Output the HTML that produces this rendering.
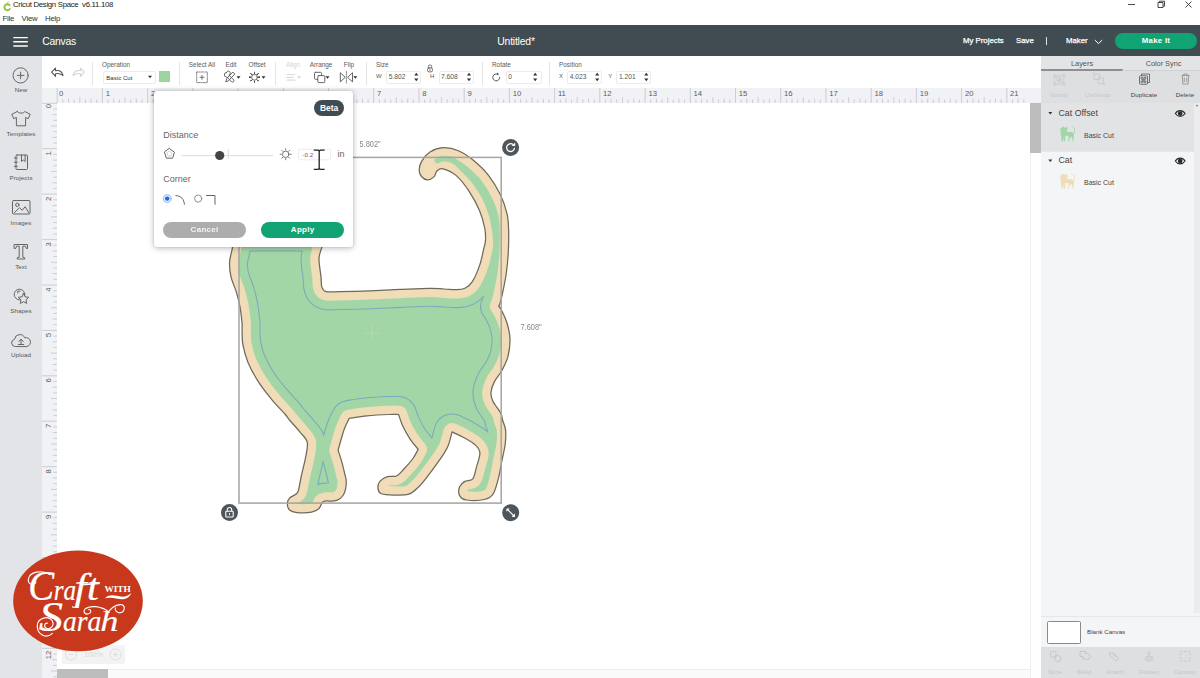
<!DOCTYPE html>
<html><head><meta charset="utf-8"><title>Cricut Design Space</title>
<style>
*{box-sizing:border-box;margin:0;padding:0}
html,body{width:1200px;height:678px;overflow:hidden;background:#fff}
body{position:relative;font-family:"Liberation Sans",sans-serif;color:#4a4a4a;font-size:7px}
.abs{position:absolute}
.t{position:absolute;white-space:nowrap;line-height:1}
.c{transform:translateX(-50%)}
#hdr{left:0;top:25px;width:1200px;height:31px;background:#414b52}
#side{left:0;top:56px;width:42px;height:622px;background:#e3e4e7}
#tool{left:42px;top:56px;width:999px;height:32px;background:#fff}
#rtop{left:42px;top:88px;width:999px;height:15px;background:#f1f2f5}
#rleft{left:42px;top:103px;width:15px;height:575px;background:#f1f2f5}
#rp{left:1041px;top:56px;width:159px;height:622px;background:#f4f5f7}
.sep{position:absolute;top:62px;width:1px;height:23px;background:#e4e4e4}
.lab{color:#5a5a5a;font-size:6.400px;top:62.100px}
.inp{position:absolute;top:70.500px;height:13.500px;border:1px solid #ececec;border-radius:2px;background:#fff}
.sl{font-size:6.2px;color:#555;letter-spacing:.1px}
</style></head><body>

<!-- title bar -->
<svg class="abs" style="left:2px;top:1px" width="10" height="11" viewBox="0 0 10 11"><path d="M7.6 4.2A3 3 0 1 0 7.8 8" fill="none" stroke="#8cc63f" stroke-width="1.9" stroke-linecap="round"/><path d="M5.2 2.2L6.8 .4" stroke="#8cc63f" stroke-width=".9" fill="none"/></svg>
<div class="t" id="ttl" style="left:13px;top:1px;font-size:7.8px;color:#222;letter-spacing:-.3px">Cricut Design Space&nbsp; v6.11.108</div>
<div class="t" style="left:2.5px;top:14.800px;font-size:7.800px;color:#333;letter-spacing:-.25px">File</div><div class="t" style="left:21.600px;top:14.800px;font-size:7.800px;color:#333;letter-spacing:-.25px">View</div><div class="t" style="left:45px;top:14.800px;font-size:7.800px;color:#333;letter-spacing:-.25px">Help</div>
<svg class="abs" style="left:1120px;top:-2px" width="80" height="14" viewBox="0 0 80 14"><path d="M8 6.5h7M38 4.5h5v5h-5zM39.5 4.5v-1.3h5v5h-1.3M65.5 3.5l6 6M71.5 3.5l-6 6" stroke="#333" stroke-width=".9" fill="none"/></svg>

<!-- header -->
<div class="abs" id="hdr"></div>
<svg class="abs" style="left:13px;top:35px" width="15" height="12" viewBox="0 0 15 12"><path d="M.3 2.600h14.500M.3 6.800h14.500M.3 11h14.500" stroke="#fff" stroke-width="1.400"/></svg>
<div class="t" style="left:42.300px;top:36.500px;font-size:10.400px;color:#fff;letter-spacing:-.28px">Canvas</div>
<div class="t c" style="left:516px;top:36.500px;font-size:10.400px;color:#fff;letter-spacing:-.2px">Untitled*</div>
<div class="t" style="left:963px;top:37px;font-size:7.8px;color:#fff;-webkit-text-stroke:.25px #fff">My Projects</div>
<div class="t" style="left:1016px;top:37px;font-size:7.8px;color:#fff;-webkit-text-stroke:.25px #fff">Save</div>
<div class="abs" style="left:1046px;top:37px;width:1px;height:8px;background:#dfe2e4"></div>
<div class="t" style="left:1066px;top:37px;font-size:7.8px;color:#fff;-webkit-text-stroke:.25px #fff">Maker</div>
<svg class="abs" style="left:1094px;top:39px" width="9" height="6" viewBox="0 0 9 6"><path d="M.8 1l3.7 3.6L8.200 1" stroke="#fff" stroke-width="1" fill="none"/></svg>
<div class="abs" style="left:1115px;top:33px;width:82px;height:16px;border-radius:8px;background:#12a374"></div>
<div class="t c" style="left:1156px;top:37px;font-size:7.8px;color:#fff;font-weight:bold;letter-spacing:.3px">Make It</div>

<!-- sidebar -->
<div class="abs" id="side"></div>

<svg class="abs" style="left:0;top:56px" width="42" height="320" viewBox="0 56 42 320" fill="none" stroke="#666" stroke-width="1" stroke-linejoin="round" stroke-linecap="round">
<circle cx="20.600" cy="75.400" r="7.600"/><path d="M17.300 75.400h6.600M20.600 72.100v6.600"/>
<path d="M17.200 111.500l-5.400 2.800 1.900 4.300 2.700-1.100v8.300h9.200v-8.300l2.700 1.100 1.900-4.300-5.400-2.800c-.8 2.200-6.700 2.200-7.600 0z"/>
<rect x="16" y="155" width="11.500" height="14.500" rx="1"/><path d="M14.300 158h3M14.300 162.200h3M14.300 166.400h3M21.500 155v6.500l1.800-1.500 1.800 1.500v-6.500"/>
<rect x="12.500" y="200.500" width="17.500" height="13.500" rx="1"/><circle cx="17.300" cy="204.800" r="1.700"/><path d="M14.500 212.500l5-4.800 2.800 2.600 2.800-3.600 3.500 5.800"/>
<path d="M14.500 244.500h13v4h-1.200l-.8-2.300h-2.700v11l2 .6v1.200h-7.600v-1.200l2-.6v-11h-2.700l-.8 2.300h-1.200z"/>
<circle cx="19.500" cy="294.500" r="5.300"/><path d="M23.500 293.500l1.600 3.300 3.600.5-2.600 2.500.6 3.600-3.200-1.700-3.200 1.700.6-3.600-2.600-2.500 3.600-.5z" fill="#e3e4e7"/><path d="M17.800 293v-1.800h2.200"/>
<path d="M14.800 346.500a3.600 3.600 0 0 1-.3-7.100a5.400 5.400 0 0 1 10.300-1.600a4.400 4.400 0 0 1 2.400 8.700z"/><path d="M21 344.500v-5M18.800 341.500l2.200-2.300 2.200 2.300M18.300 344.500h5.400"/>
</svg>
<div class="t c sl" style="left:21px;top:86.5px;">New</div><div class="t c sl" style="left:21px;top:130.5px;">Templates</div><div class="t c sl" style="left:21px;top:175px;">Projects</div><div class="t c sl" style="left:21px;top:219.5px;">Images</div><div class="t c sl" style="left:21px;top:263.5px;">Text</div><div class="t c sl" style="left:21px;top:308px;">Shapes</div><div class="t c sl" style="left:21px;top:352px;">Upload</div>

<!-- toolbar -->
<div class="abs" id="tool"></div>

<div class="sep" style="left:92px"></div><div class="sep" style="left:179px"></div><div class="sep" style="left:275px"></div><div class="sep" style="left:366px"></div><div class="sep" style="left:482px"></div><div class="sep" style="left:549px"></div>
<div class="t lab" style="left:102px">Operation</div>
<div class="inp" style="left:103px;width:53px"></div><div class="t" style="left:106.300px;top:74.800px;font-size:6.100px;color:#333">Basic Cut</div>
<div class="abs" style="left:158.700px;top:71.200px;width:11.300px;height:11px;background:#9fd3a2"></div>
<div class="t lab c" style="left:202px">Select All</div>
<div class="t lab c" style="left:231px">Edit</div>
<div class="t lab c" style="left:257px">Offset</div>
<div class="t lab c" style="left:293px;color:#d4d4d4">Align</div>
<div class="t lab c" style="left:321px">Arrange</div>
<div class="t lab c" style="left:349px">Flip</div>
<div class="t lab" style="left:376px">Size</div>
<div class="t lab" style="left:376px;top:73.300px;font-size:6px">W</div>
<div class="inp" style="left:385.500px;width:35px"></div><div class="t" style="left:388.700px;top:74.300px;font-size:6.700px;color:#555">5.802</div>
<div class="t lab" style="left:430px;top:73.300px;font-size:6px">H</div>
<div class="inp" style="left:438.500px;width:35px"></div><div class="t" style="left:441px;top:74.300px;font-size:6.700px;color:#555">7.608</div>
<div class="t lab" style="left:492px">Rotate</div>
<div class="inp" style="left:505.500px;width:36px"></div><div class="t" style="left:508.300px;top:74.300px;font-size:6.700px;color:#555">0</div>
<div class="t lab" style="left:559px">Position</div>
<div class="t lab" style="left:559px;top:73.300px;font-size:6px">X</div>
<div class="inp" style="left:566.500px;width:35px"></div><div class="t" style="left:569.700px;top:74.300px;font-size:6.700px;color:#555">4.023</div>
<div class="t lab" style="left:608.300px;top:73.300px;font-size:6px">Y</div>
<div class="inp" style="left:615.500px;width:35px"></div><div class="t" style="left:619px;top:74.300px;font-size:6.700px;color:#555">1.201</div>
<svg class="abs" style="left:42px;top:56px" width="660" height="32" viewBox="42 56 660 32" fill="none" stroke="#555" stroke-width=".9" stroke-linecap="round" stroke-linejoin="round">
<path d="M63 75.500c-1-4-4-5.500-7.500-4.800v-2.700l-3.800 4.200 3.800 4.200v-2.700c3-.5 5.500.2 7.500 1.800z" stroke="#555" stroke-width="1.100"/>
<path d="M73 75.500c1-4 4-5.500 7.500-4.800v-2.700l3.800 4.200-3.800 4.200v-2.700c-3-.5-5.500.2-7.500 1.800z" stroke="#d4d4d4" stroke-width="1.100"/>
<path d="M148.0 75.7h4l-2 2.600z" fill="#333" stroke="none"/>
<rect x="196.700" y="72" width="10.600" height="10.600" stroke-dasharray="1.300 1.100" stroke="#666" stroke-width=".8"/><path d="M200 77.300h4M202 75.300v4" stroke="#666"/>
<g transform="translate(1.300 0)"><path d="M224.500 81.500l1-3 6-6.500 2 2-6 6.500zM225 72.500a2 2 0 1 1 2.500 2.500l5 5a1.500 1.500 0 0 1-2 2l-5-5a2 2 0 0 1-.5-4.500z"/></g><path d="M236.5 76.2h4l-2 2.600z" fill="#333" stroke="none"/>
<circle cx="254.500" cy="77.300" r="2.900"/><path d="M254.500 72.200v1.200M254.500 81.200v1.200M249.400 77.300h1.200M258.400 77.300h1.200M250.900 73.700l.9.900M257.200 80l.9.900M258.100 73.700l-.9.900M251.800 80l-.9.900" stroke-dasharray=".1 0"/><path d="M261.5 76.2h4l-2 2.600z" fill="#333" stroke="none"/>
<path d="M287 74.500h8M287 77.300h6M287 80.100h8" stroke="#dcdcdc" stroke-width="1.200"/><path d="M297.0 76.2h4l-2 2.600z" fill="#d6d6d6" stroke="none"/>
<rect x="314.500" y="72.300" width="7" height="7" rx="1"/><rect x="317.800" y="75.600" width="7" height="7" rx="1" fill="#fff"/><path d="M325.5 76.2h4l-2 2.600z" fill="#333" stroke="none"/>
<path d="M340.600 73l4.600 4.300-4.600 4.300zM352.200 73l-4.600 4.300 4.600 4.300z"/><path d="M346.400 71.500v11.500" stroke-dasharray="1.200 1" stroke-width=".7"/><path d="M353.3 76.2h4l-2 2.600z" fill="#333" stroke="none"/>
<path d="M414.2 75.600l2.100-2.800 2.100 2.800zM414.2 78.400l2.100 2.800 2.100-2.800z" fill="#333" stroke="none"/><path d="M466.9 75.600l2.100-2.800 2.100 2.800zM466.9 78.400l2.100 2.800 2.100-2.800z" fill="#333" stroke="none"/><path d="M533.1 75.600l2.100-2.800 2.100 2.800zM533.1 78.400l2.100 2.800 2.100-2.800z" fill="#333" stroke="none"/><path d="M595.1 75.600l2.100-2.800 2.100 2.800zM595.1 78.400l2.100 2.800 2.100-2.800z" fill="#333" stroke="none"/><path d="M644.2 75.600l2.100-2.800 2.100 2.800zM644.2 78.400l2.100 2.800 2.100-2.800z" fill="#333" stroke="none"/>
<g transform="translate(1 .4)"><path d="M427.300 67.500v-1.300a1.700 1.700 0 0 1 3.400 0v1.300" stroke-width=".8"/><rect x="426.500" y="67.500" width="5" height="4" rx="1.500" stroke-width=".8"/><path d="M429 68.700v1.600" stroke-width=".7"/></g>
<path d="M499.800 77.300a3.500 3.500 0 1 1-1.800-3" stroke-width="1"/><path d="M497.200 72.500l1.800 1.700-2.300.9z" fill="#555" stroke="none"/>
</svg>


<!-- rulers -->
<div class="abs" id="rtop"></div>
<div class="abs" id="rleft"></div>
<svg class="abs" style="left:0;top:0" width="1041" height="678" viewBox="0 0 1041 678"><path d="M57.2 88V103M62.9 99.4V103M68.5 98.6V103M74.2 99.4V103M79.8 97.2V103M85.5 99.4V103M91.1 98.6V103M96.8 99.4V103M102.4 88V103M108.1 99.4V103M113.7 98.6V103M119.4 99.4V103M125.0 97.2V103M130.7 99.4V103M136.3 98.6V103M142.0 99.4V103M147.6 88V103M153.3 99.4V103M158.9 98.6V103M164.6 99.4V103M170.2 97.2V103M175.9 99.4V103M181.6 98.6V103M187.2 99.4V103M192.9 88V103M198.5 99.4V103M204.2 98.6V103M209.8 99.4V103M215.5 97.2V103M221.1 99.4V103M226.8 98.6V103M232.4 99.4V103M238.1 88V103M243.7 99.4V103M249.4 98.6V103M255.0 99.4V103M260.7 97.2V103M266.3 99.4V103M272.0 98.6V103M277.6 99.4V103M283.3 88V103M289.0 99.4V103M294.6 98.6V103M300.3 99.4V103M305.9 97.2V103M311.6 99.4V103M317.2 98.6V103M322.9 99.4V103M328.5 88V103M334.2 99.4V103M339.8 98.6V103M345.5 99.4V103M351.1 97.2V103M356.8 99.4V103M362.4 98.6V103M368.1 99.4V103M373.7 88V103M379.4 99.4V103M385.0 98.6V103M390.7 99.4V103M396.3 97.2V103M402.0 99.4V103M407.7 98.6V103M413.3 99.4V103M419.0 88V103M424.6 99.4V103M430.3 98.6V103M435.9 99.4V103M441.6 97.2V103M447.2 99.4V103M452.9 98.6V103M458.5 99.4V103M464.2 88V103M469.8 99.4V103M475.5 98.6V103M481.1 99.4V103M486.8 97.2V103M492.4 99.4V103M498.1 98.6V103M503.7 99.4V103M509.4 88V103M515.1 99.4V103M520.7 98.6V103M526.4 99.4V103M532.0 97.2V103M537.7 99.4V103M543.3 98.6V103M549.0 99.4V103M554.6 88V103M560.3 99.4V103M565.9 98.6V103M571.6 99.4V103M577.2 97.2V103M582.9 99.4V103M588.5 98.6V103M594.2 99.4V103M599.8 88V103M605.5 99.4V103M611.1 98.6V103M616.8 99.4V103M622.5 97.2V103M628.1 99.4V103M633.8 98.6V103M639.4 99.4V103M645.1 88V103M650.7 99.4V103M656.4 98.6V103M662.0 99.4V103M667.7 97.2V103M673.3 99.4V103M679.0 98.6V103M684.6 99.4V103M690.3 88V103M695.9 99.4V103M701.6 98.6V103M707.2 99.4V103M712.9 97.2V103M718.5 99.4V103M724.2 98.6V103M729.8 99.4V103M735.5 88V103M741.2 99.4V103M746.8 98.6V103M752.5 99.4V103M758.1 97.2V103M763.8 99.4V103M769.4 98.6V103M775.1 99.4V103M780.7 88V103M786.4 99.4V103M792.0 98.6V103M797.7 99.4V103M803.3 97.2V103M809.0 99.4V103M814.6 98.6V103M820.3 99.4V103M825.9 88V103M831.6 99.4V103M837.2 98.6V103M842.9 99.4V103M848.6 97.2V103M854.2 99.4V103M859.9 98.6V103M865.5 99.4V103M871.2 88V103M876.8 99.4V103M882.5 98.6V103M888.1 99.4V103M893.8 97.2V103M899.4 99.4V103M905.1 98.6V103M910.7 99.4V103M916.4 88V103M922.0 99.4V103M927.7 98.6V103M933.3 99.4V103M939.0 97.2V103M944.6 99.4V103M950.3 98.6V103M955.9 99.4V103M961.6 88V103M967.3 99.4V103M972.9 98.6V103M978.6 99.4V103M984.2 97.2V103M989.9 99.4V103M995.5 98.6V103M1001.2 99.4V103M1006.8 88V103M1012.5 99.4V103M1018.1 98.6V103M1023.8 99.4V103M42 103.3H57M53.4 109.0H57M52.6 114.7H57M53.4 120.3H57M51.2 126.0H57M53.4 131.7H57M52.6 137.4H57M53.4 143.0H57M42 148.7H57M53.4 154.4H57M52.6 160.1H57M53.4 165.8H57M51.2 171.4H57M53.4 177.1H57M52.6 182.8H57M53.4 188.5H57M42 194.1H57M53.4 199.8H57M52.6 205.5H57M53.4 211.2H57M51.2 216.8H57M53.4 222.5H57M52.6 228.2H57M53.4 233.9H57M42 239.6H57M53.4 245.2H57M52.6 250.9H57M53.4 256.6H57M51.2 262.3H57M53.4 267.9H57M52.6 273.6H57M53.4 279.3H57M42 285.0H57M53.4 290.7H57M52.6 296.3H57M53.4 302.0H57M51.2 307.7H57M53.4 313.4H57M52.6 319.0H57M53.4 324.7H57M42 330.4H57M53.4 336.1H57M52.6 341.8H57M53.4 347.4H57M51.2 353.1H57M53.4 358.8H57M52.6 364.5H57M53.4 370.1H57M42 375.8H57M53.4 381.5H57M52.6 387.2H57M53.4 392.9H57M51.2 398.5H57M53.4 404.2H57M52.6 409.9H57M53.4 415.6H57M42 421.2H57M53.4 426.9H57M52.6 432.6H57M53.4 438.3H57M51.2 443.9H57M53.4 449.6H57M52.6 455.3H57M53.4 461.0H57M42 466.7H57M53.4 472.3H57M52.6 478.0H57M53.4 483.7H57M51.2 489.4H57M53.4 495.0H57M52.6 500.7H57M53.4 506.4H57M42 512.1H57M53.4 517.8H57M52.6 523.4H57M53.4 529.1H57M51.2 534.8H57M53.4 540.5H57M52.6 546.1H57M53.4 551.8H57M42 557.5H57M53.4 563.2H57M52.6 568.9H57M53.4 574.5H57M51.2 580.2H57M53.4 585.9H57M52.6 591.6H57M53.4 597.2H57M42 602.9H57M53.4 608.6H57M52.6 614.3H57M53.4 620.0H57M51.2 625.6H57M53.4 631.3H57M52.6 637.0H57M53.4 642.7H57M42 648.3H57M53.4 654.0H57M52.6 659.7H57M53.4 665.4H57M51.2 671.0H57M53.4 676.7H57M52.6 682.4H57M53.4 688.1H57" stroke="#c2c4c9" stroke-width=".8" fill="none"/><text x="59.0" y="96.200" font-size="7.700" fill="#5c5c5c" font-family="Liberation Sans">0</text><text x="105.7" y="96.200" font-size="7.700" fill="#5c5c5c" font-family="Liberation Sans">1</text><text x="150.9" y="96.200" font-size="7.700" fill="#5c5c5c" font-family="Liberation Sans">2</text><text x="196.2" y="96.200" font-size="7.700" fill="#5c5c5c" font-family="Liberation Sans">3</text><text x="241.4" y="96.200" font-size="7.700" fill="#5c5c5c" font-family="Liberation Sans">4</text><text x="286.6" y="96.200" font-size="7.700" fill="#5c5c5c" font-family="Liberation Sans">5</text><text x="331.8" y="96.200" font-size="7.700" fill="#5c5c5c" font-family="Liberation Sans">6</text><text x="377.0" y="96.200" font-size="7.700" fill="#5c5c5c" font-family="Liberation Sans">7</text><text x="422.3" y="96.200" font-size="7.700" fill="#5c5c5c" font-family="Liberation Sans">8</text><text x="467.5" y="96.200" font-size="7.700" fill="#5c5c5c" font-family="Liberation Sans">9</text><text x="512.7" y="96.200" font-size="7.700" fill="#5c5c5c" font-family="Liberation Sans">10</text><text x="557.9" y="96.200" font-size="7.700" fill="#5c5c5c" font-family="Liberation Sans">11</text><text x="603.1" y="96.200" font-size="7.700" fill="#5c5c5c" font-family="Liberation Sans">12</text><text x="648.4" y="96.200" font-size="7.700" fill="#5c5c5c" font-family="Liberation Sans">13</text><text x="693.6" y="96.200" font-size="7.700" fill="#5c5c5c" font-family="Liberation Sans">14</text><text x="738.8" y="96.200" font-size="7.700" fill="#5c5c5c" font-family="Liberation Sans">15</text><text x="784.0" y="96.200" font-size="7.700" fill="#5c5c5c" font-family="Liberation Sans">16</text><text x="829.2" y="96.200" font-size="7.700" fill="#5c5c5c" font-family="Liberation Sans">17</text><text x="874.5" y="96.200" font-size="7.700" fill="#5c5c5c" font-family="Liberation Sans">18</text><text x="919.7" y="96.200" font-size="7.700" fill="#5c5c5c" font-family="Liberation Sans">19</text><text x="964.9" y="96.200" font-size="7.700" fill="#5c5c5c" font-family="Liberation Sans">20</text><text x="1010.1" y="96.200" font-size="7.700" fill="#5c5c5c" font-family="Liberation Sans">21</text><text transform="translate(51.300,104.0) rotate(-90)" text-anchor="end" font-size="7.700" fill="#5c5c5c" font-family="Liberation Sans">0</text><text transform="translate(51.300,151.2) rotate(-90)" text-anchor="end" font-size="7.700" fill="#5c5c5c" font-family="Liberation Sans">1</text><text transform="translate(51.300,196.6) rotate(-90)" text-anchor="end" font-size="7.700" fill="#5c5c5c" font-family="Liberation Sans">2</text><text transform="translate(51.300,242.1) rotate(-90)" text-anchor="end" font-size="7.700" fill="#5c5c5c" font-family="Liberation Sans">3</text><text transform="translate(51.300,287.5) rotate(-90)" text-anchor="end" font-size="7.700" fill="#5c5c5c" font-family="Liberation Sans">4</text><text transform="translate(51.300,332.9) rotate(-90)" text-anchor="end" font-size="7.700" fill="#5c5c5c" font-family="Liberation Sans">5</text><text transform="translate(51.300,378.3) rotate(-90)" text-anchor="end" font-size="7.700" fill="#5c5c5c" font-family="Liberation Sans">6</text><text transform="translate(51.300,423.7) rotate(-90)" text-anchor="end" font-size="7.700" fill="#5c5c5c" font-family="Liberation Sans">7</text><text transform="translate(51.300,469.2) rotate(-90)" text-anchor="end" font-size="7.700" fill="#5c5c5c" font-family="Liberation Sans">8</text><text transform="translate(51.300,514.6) rotate(-90)" text-anchor="end" font-size="7.700" fill="#5c5c5c" font-family="Liberation Sans">9</text><text transform="translate(51.300,560.0) rotate(-90)" text-anchor="end" font-size="7.700" fill="#5c5c5c" font-family="Liberation Sans">10</text><text transform="translate(51.300,605.4) rotate(-90)" text-anchor="end" font-size="7.700" fill="#5c5c5c" font-family="Liberation Sans">11</text><text transform="translate(51.300,650.8) rotate(-90)" text-anchor="end" font-size="7.700" fill="#5c5c5c" font-family="Liberation Sans">12</text></svg>

<!-- canvas art -->
<svg class="abs" style="left:0;top:0" width="1041" height="678" viewBox="0 0 1041 678">
<defs>
<path id="cat" d="M234.0 233.0C233.8 235.4 233.2 242.6 232.5 247.4C231.8 252.2 229.8 257.1 229.6 262.0C229.3 266.9 229.9 272.0 231.0 276.9C232.1 281.8 234.7 286.7 236.2 291.6C237.7 296.5 238.9 301.2 239.9 306.4C240.9 311.6 241.6 318.7 242.0 322.6C242.4 326.5 241.9 326.3 242.1 330.0C242.2 333.7 241.9 339.3 242.9 344.7C243.9 350.1 245.4 356.2 248.0 362.4C250.6 368.5 254.4 375.5 258.3 381.6C262.2 387.8 267.2 393.9 271.6 399.3C276.0 404.7 281.9 410.6 284.9 414.0C287.9 417.4 287.0 417.0 289.5 420.0C292.0 423.0 296.9 428.1 299.8 431.8C302.8 435.5 306.2 437.9 307.2 442.1C308.2 446.3 306.7 451.2 305.7 456.9C304.7 462.5 302.5 470.4 301.3 476.0C300.1 481.6 299.3 487.7 298.3 490.8C297.3 493.9 296.9 493.3 295.4 494.5C293.9 495.7 290.9 496.6 289.5 498.2C288.1 499.8 287.3 502.0 287.3 504.0C287.3 506.0 287.9 508.6 289.5 510.0C291.1 511.4 293.2 512.2 296.9 512.6C300.6 513.0 307.9 512.9 311.6 512.2C315.3 511.5 317.3 510.1 319.0 508.5C320.7 506.9 321.5 503.6 322.0 502.6C322.5 502.4 322.4 501.5 324.9 501.1C327.3 500.7 333.5 501.6 336.7 500.4C339.9 499.2 342.4 496.8 344.0 493.7C345.6 490.6 346.2 485.3 346.3 482.0C346.4 478.7 345.4 477.1 344.7 473.7C343.9 470.3 342.9 465.8 341.8 461.9C340.7 458.0 338.7 452.1 338.1 450.1C338.6 448.4 339.9 443.5 341.0 439.8C342.1 436.1 343.3 431.6 344.7 428.0C346.1 424.4 348.4 420.0 349.2 418.4C352.1 418.0 360.3 416.5 366.9 415.9C373.5 415.2 383.7 414.7 389.0 414.5C394.3 414.3 397.0 414.5 398.6 414.5C399.2 416.2 400.5 421.0 402.3 425.0C404.1 429.0 407.0 434.2 409.6 438.3C412.2 442.4 416.8 447.5 418.2 449.4C417.3 451.0 415.0 455.7 412.6 459.0C410.2 462.3 406.4 466.5 403.7 469.3C401.0 472.1 399.1 474.8 396.4 476.0C393.7 477.2 390.2 475.8 387.5 476.7C384.8 477.6 381.7 479.4 380.1 481.1C378.5 482.8 377.9 485.0 377.9 487.0C377.9 489.0 378.2 491.6 380.1 492.9C382.0 494.2 384.3 494.6 389.0 494.8C393.7 495.1 403.3 495.7 408.2 494.4C413.1 493.1 415.2 490.1 418.5 487.0C421.8 483.9 423.8 481.2 427.7 476.1C431.6 471.0 438.5 461.6 441.9 456.6C445.3 451.6 446.3 450.1 448.0 446.0C449.7 441.9 451.4 434.2 452.1 431.9C453.9 432.8 459.2 435.0 463.1 437.2C467.0 439.4 472.7 442.5 475.5 445.1C478.3 447.8 479.8 449.4 479.9 453.1C480.0 456.8 477.6 463.0 476.4 467.3C475.2 471.6 474.7 476.5 472.8 478.8C470.9 481.1 467.1 480.1 464.9 481.4C462.7 482.7 460.5 484.3 459.6 486.7C458.7 489.1 458.4 493.4 459.6 495.6C460.8 497.8 462.5 499.4 466.6 500.0C470.7 500.6 479.9 500.5 484.3 499.5C488.7 498.5 490.8 497.4 493.2 493.8C495.6 490.2 497.0 483.5 498.5 477.9C500.0 472.3 500.9 465.8 502.0 460.2C503.1 454.6 504.6 449.2 505.2 444.2C505.8 439.2 506.0 434.1 505.6 430.1C505.2 426.1 503.4 422.8 502.6 420.0C501.8 417.2 502.4 416.5 500.8 413.3C499.2 410.1 494.4 404.4 492.8 400.9C491.2 397.3 490.7 395.2 491.0 392.0C491.3 388.8 492.8 384.9 494.6 381.4C496.4 377.9 499.5 374.9 501.7 370.8C503.9 366.7 506.5 361.9 507.9 356.6C509.3 351.3 510.1 344.6 510.0 339.0C509.9 333.4 508.4 327.7 507.0 323.0C505.6 318.3 503.1 313.4 501.7 310.6C500.3 307.8 499.2 306.9 498.7 306.2C499.0 305.6 499.7 304.4 500.3 302.3C500.9 300.2 501.5 298.1 502.5 293.4C503.5 288.7 505.2 280.9 506.2 274.0C507.2 267.1 507.9 259.3 508.3 252.0C508.7 244.7 508.8 236.4 508.6 230.0C508.4 223.6 508.4 219.6 507.0 213.7C505.6 207.8 503.4 201.0 500.3 194.6C497.2 188.2 492.9 181.1 488.5 175.4C484.1 169.7 478.6 164.7 473.7 160.6C468.8 156.5 464.1 153.2 459.0 151.0C453.9 148.8 447.6 147.5 442.8 147.7C438.0 147.9 433.5 149.8 430.0 152.0C426.5 154.2 423.8 157.7 422.0 160.6C420.2 163.5 419.3 166.8 419.2 169.5C419.1 172.2 420.1 174.8 421.5 176.5C422.9 178.2 425.2 179.7 427.3 179.8C429.4 179.9 432.4 178.4 434.0 176.9C435.6 175.4 435.4 172.3 436.9 171.0C438.4 169.7 439.6 168.1 442.8 168.8C446.0 169.5 451.6 171.6 456.0 175.4C460.4 179.2 465.4 185.7 469.3 191.6C473.2 197.5 477.0 204.7 479.6 210.8C482.2 217.0 483.8 223.6 484.8 228.5C485.8 233.4 485.6 236.8 485.5 240.0C485.4 243.2 485.0 243.5 484.0 247.7C483.0 251.9 481.6 259.8 479.6 265.4C477.7 271.0 474.8 277.8 472.3 281.6C469.9 285.4 467.6 287.0 464.9 288.3C462.2 289.6 459.4 289.6 456.0 289.7C452.6 289.8 448.6 289.2 444.2 289.0C439.8 288.8 436.9 288.2 429.5 288.3C422.1 288.4 409.9 289.0 400.0 289.4C390.1 289.8 380.0 290.4 370.0 290.8C360.0 291.2 347.3 291.5 340.0 291.6C332.7 291.7 329.0 292.4 326.0 291.6C323.0 290.8 322.6 289.4 321.8 287.0C321.0 284.6 321.5 281.6 321.0 276.9C320.5 272.2 318.9 263.9 319.0 259.0C319.1 254.1 320.6 251.7 321.8 247.4C323.0 243.1 325.3 235.4 326.0 233.0Z"/>
<clipPath id="cc"><use href="#cat"/></clipPath>
<mask id="m1" maskUnits="userSpaceOnUse" x="200" y="130" width="340" height="400"><use href="#cat" fill="#fff" stroke="#000" stroke-width="17.6" stroke-linejoin="round"/><rect x="412" y="140" width="28" height="46" fill="#000"/></mask>
<mask id="m2a" maskUnits="userSpaceOnUse" x="200" y="130" width="340" height="400"><use href="#cat" fill="#fff" stroke="#000" stroke-width="34.8" stroke-linejoin="round"/></mask>
<mask id="m2b" maskUnits="userSpaceOnUse" x="200" y="130" width="340" height="400"><use href="#cat" fill="#fff" stroke="#000" stroke-width="37.0" stroke-linejoin="round"/></mask>
</defs>
<use href="#cat" fill="#f0dcb6" stroke="#70685a" stroke-width="1.250" stroke-linejoin="round"/>
<rect x="200" y="130" width="340" height="400" fill="#a3d6a7" mask="url(#m1)"/>
<rect x="200" y="130" width="340" height="400" fill="#79acba" mask="url(#m2a)"/>
<rect x="200" y="130" width="340" height="400" fill="#a3d6a7" mask="url(#m2b)"/>
<path d="M437.500 160.400C441 158.600 446 158.400 450.100 159.300C455 161 459.500 165 463.400 169.500C468 174 473 179 476.700 184.200C481 190 484.500 196 487 202C489.500 208 491.600 214 492.900 219.600C494.500 226 495.600 233 495.900 240C496.100 245 496 250 495.500 256" fill="none" stroke="#a3d6a7" stroke-width="5.800" stroke-linecap="round" clip-path="url(#cc)"/>
<path d="M372 325v16M364 333h16" stroke="#b4dab6" stroke-width=".8"/>
<rect x="239" y="157.400" width="262.200" height="345.700" fill="none" stroke="#a4a4a4" stroke-width="1.500"/>
<!-- handles -->
<g><circle cx="510.600" cy="147.400" r="8.500" fill="#4e555b"/><path d="M514.500 147.800a3.900 3.900 0 1 1-1.400-3.200" fill="none" stroke="#fff" stroke-width="1.300"/><path d="M515.200 142.400v3.600h-3.600z" fill="#fff"/></g>
<g transform="translate(.1 .3)"><circle cx="510.600" cy="512.400" r="8.500" fill="#4e555b"/><path d="M507.300 509.100l6.600 6.600" stroke="#fff" stroke-width="1.100"/><path d="M506.300 508.100h3.400l-3.400 3.400zM514.900 516.700h-3.400l3.400-3.400z" fill="#fff"/></g>
<g><circle cx="229.500" cy="512.500" r="8.500" fill="#4e555b"/><rect x="225.800" y="511.200" width="7.400" height="5.800" rx=".8" fill="none" stroke="#fff" stroke-width="1.100"/><path d="M227.300 511.200v-1.500a2.200 2.200 0 0 1 4.400 0v1.500" fill="none" stroke="#fff" stroke-width="1.100"/><rect x="229" y="513.100" width="1" height="2" fill="#fff"/></g>
</svg>
<div class="t" style="left:359.500px;top:140.800px;font-size:7.400px;color:#858585;transform:scaleY(1.15);transform-origin:0 50%">5.802"</div>
<div class="t" style="left:520.500px;top:323.500px;font-size:7.400px;color:#858585;transform:scaleY(1.15);transform-origin:0 50%">7.608"</div>

<!-- scrollbars / zoom -->
<div class="abs" style="left:1030px;top:103px;width:11px;height:575px;background:#fefefe;border-left:1px solid #efefef"></div>
<div class="abs" style="left:1030px;top:103px;width:11px;height:50px;background:#bdbdbd"></div>
<div class="abs" style="left:57px;top:668.500px;width:973px;height:10px;background:#fafafa;border-top:1px solid #ececec"></div>
<div class="abs" style="left:57px;top:669.300px;width:51px;height:9px;background:#bdbdbd"></div>
<div class="abs" style="left:62px;top:645px;width:63px;height:19px;background:#f3f3f3;border-radius:2px"></div>
<svg class="abs" style="left:62px;top:645px" width="63" height="19" viewBox="0 0 63 19"><circle cx="9" cy="9.500" r="5.500" fill="none" stroke="#dedede"/><path d="M6.500 9.500h5" stroke="#dedede"/><circle cx="53.500" cy="9.500" r="5.500" fill="none" stroke="#dedede"/><path d="M51 9.500h5M53.500 7v5" stroke="#dedede"/></svg>
<div class="t c" style="left:93.500px;top:651px;font-size:7.4px;color:#d8d8d8">100%</div>


<div class="abs" style="left:153.500px;top:90.500px;width:199.500px;height:156.500px;background:#fff;border-radius:3px;box-shadow:0 1px 6px rgba(0,0,0,.28),0 0 2px rgba(0,0,0,.15)"></div>
<div class="abs" style="left:314px;top:100px;width:30px;height:16px;border-radius:8px;background:#414b52"></div>
<div class="t c" style="left:329px;top:103.500px;font-size:8.500px;color:#fff;font-weight:bold;letter-spacing:-.1px">Beta</div>
<div class="t" style="left:163.300px;top:130.500px;font-size:9px;color:#666">Distance</div>
<div class="t" style="left:163.300px;top:175px;font-size:9px;color:#666">Corner</div>
<svg class="abs" style="left:154px;top:140px" width="199" height="70" viewBox="154 140 199 70" fill="none" stroke="#666" stroke-width=".9" stroke-linejoin="round" stroke-linecap="round">
<path d="M169.500 148.600l5 3.700-1.900 5.900h-6.200l-1.900-5.900z" stroke-width="1"/><path d="M169.500 151.200l2.500 1.900-1 3h-3l-1-3z" stroke="#bbb" stroke-width=".6"/>
<path d="M182 155.700h90.500" stroke="#dcdcdc" stroke-width="1"/><path d="M228.300 149.300v9" stroke="#dcdcdc" stroke-width="1"/>
<circle cx="219.700" cy="155.500" r="4.600" fill="#444" stroke="none"/>
<circle cx="285.700" cy="154.300" r="3.200"/><path d="M285.700 148.800v1.200M285.700 158.600v1.200M280.200 154.300h1.200M290 154.300h1.200M281.800 150.400l.9.900M288.700 157.300l.9.900M289.600 150.400l-.9.900M282.700 157.300l-.9.900"/>
<rect x="298.500" y="149.300" width="32" height="10.500" rx="1.500" stroke="#ebebeb" fill="#fff"/>
<path d="M313.800 150.200h3.800c1 0 1.600.4 1.600 1.400v16.300c0 1-.6 1.400-1.600 1.400h-3.800M324.600 150.200h-3.800c-1 0-1.600.4-1.600 1.400M324.600 169.300h-3.800c-1 0-1.600-.4-1.600-1.400" stroke="#222" stroke-width="1.300" stroke-linecap="butt"/>
<circle cx="167.200" cy="198.600" r="3.900" stroke="#8db3f2" fill="#e4eefd" stroke-width=".9"/><circle cx="167.200" cy="198.600" r="2.200" fill="#1b6ae0" stroke="none"/>
<path d="M175.800 195.500c5.500.5 8.200 3.500 8.600 8.800" stroke="#555"/>
<circle cx="198.200" cy="198.600" r="3.600" stroke="#777" fill="#fff" stroke-width=".8"/>
<path d="M206.500 195.500h8.500v8.800" stroke="#555"/>
</svg>
<div class="t" style="left:302.500px;top:151.800px;font-size:6.200px;color:#666">-0.2</div>
<div class="t" style="left:337.500px;top:149.500px;font-size:9px;color:#666">in</div>
<div class="abs" style="left:163.300px;top:221.700px;width:82.700px;height:16.200px;border-radius:8.100px;background:#adadad"></div>
<div class="t c" style="left:204.600px;top:226px;font-size:8px;color:#fff;font-weight:bold;letter-spacing:.3px;opacity:.85">Cancel</div>
<div class="abs" style="left:261.200px;top:221.700px;width:83px;height:16.200px;border-radius:8.100px;background:#12a374"></div>
<div class="t c" style="left:302.700px;top:226px;font-size:8px;color:#fff;font-weight:bold;letter-spacing:.3px">Apply</div>



<div class="abs" id="rp"></div>
<div class="abs" style="left:1041px;top:56px;width:159px;height:14.500px;background:#e3e4e6"></div>
<div class="abs" style="left:1041px;top:69.200px;width:81.500px;height:1.500px;background:#8c8f93"></div>
<div class="abs" style="left:1122px;top:70px;width:78px;height:1px;background:#d0d1d3"></div>
<div class="t c" style="left:1082px;top:60px;font-size:7.400px;color:#555">Layers</div>
<div class="t c" style="left:1163.500px;top:60px;font-size:7.300px;color:#555">Color Sync</div>
<div class="abs" style="left:1041px;top:71px;width:159px;height:31.500px;background:#dedfe1"></div>
<svg class="abs" style="left:1041px;top:71px" width="159" height="20" viewBox="1041 71 159 20" fill="none" stroke="#555" stroke-width=".8" stroke-linejoin="round">
<g stroke="#c6c7c9" transform="translate(1059.300 79.300) scale(.88) translate(-1059.300 -78.500)"><rect x="1054" y="74.500" width="10.500" height="9.500"/><rect x="1052.800" y="73.300" width="2.400" height="2.400" fill="#dedfe1"/><rect x="1063.300" y="73.300" width="2.400" height="2.400" fill="#dedfe1"/><rect x="1052.800" y="82.800" width="2.400" height="2.400" fill="#dedfe1"/><rect x="1063.300" y="82.800" width="2.400" height="2.400" fill="#dedfe1"/><rect x="1056.500" y="76.500" width="4" height="3.500"/><rect x="1058.500" y="78.500" width="4" height="3.500"/></g>
<g stroke="#c6c7c9"><rect x="1094" y="74" width="5.500" height="5.500"/><rect x="1098" y="78" width="5.500" height="5.500"/><path d="M1093 73v1.500M1093 73h1.500M1104.500 84.500v-1.500M1104.500 84.500h-1.500"/></g>
<g transform="translate(0 .8)"><rect x="1139.500" y="75" width="8" height="8.500" rx="1"/><path d="M1141.500 75v-1.800h8v8.500h-2"/><circle cx="1142" cy="77.500" r="1"/><circle cx="1145" cy="77.500" r="1"/><circle cx="1142" cy="81" r="1"/><circle cx="1145" cy="81" r="1"/><circle cx="1143.500" cy="79.200" r=".9"/></g>
<g stroke="#8a8a8a"><path d="M1181.500 75.500h8M1182.300 75.500l.6 8.500h5.200l.6-8.500M1183.800 75.500v-1.500h3.400v1.500M1184.300 77.500v4.500M1186.700 77.500v4.500"/></g>
</svg>
<div class="t c sl" style="left:1059px;top:91.500px;color:#c4c5c7">Group</div>
<div class="t c sl" style="left:1098px;top:91.500px;color:#c4c5c7">UnGroup</div>
<div class="t c sl" style="left:1144px;top:91.500px;color:#444">Duplicate</div>
<div class="t c sl" style="left:1185px;top:91.500px;color:#444">Delete</div>
<div class="abs" style="left:1041px;top:102.500px;width:153px;height:48px;background:#e2e3e5"></div>
<div class="abs" style="left:1041px;top:150.500px;width:153px;height:1px;background:#e6e7e9"></div>
<div class="abs" style="left:1194px;top:102.500px;width:6px;height:510px;background:#ececee"></div>
<svg class="abs" style="left:1041px;top:102px" width="159" height="100" viewBox="1041 102 159 100">
<path d="M1048.300 112h4l-2 2.400zM1048.300 159.500h4l-2 2.400z" fill="#333"/>
<g fill="none" stroke="#2b2b2b" stroke-width="1.100"><path d="M1175.300 113.500c2.500-3.800 7.300-3.800 9.800 0c-2.500 3.800-7.300 3.800-9.800 0z"/><circle cx="1180.200" cy="113.500" r="1.800" fill="#2b2b2b"/><path d="M1175.300 161c2.500-3.800 7.300-3.800 9.800 0c-2.500 3.800-7.300 3.800-9.800 0z"/><circle cx="1180.200" cy="161" r="1.800" fill="#2b2b2b"/></g>
<g transform="translate(1060.400,125.300) scale(.85,.76)"><path d="M3.500 1.200l1 1.600h2.200l1-1.600.6 3.300c0 1.500-.6 2.400-1.500 3 1 1.400 3.400 1.200 5.800 1.400 2 .2 2.500 1.300 2.600 2.400.9-2.200 1.400-4.600.9-6.800-.4-1.700-1.500-2.400-2.600-2l-.2-.7c1.700-.7 3.200.4 3.700 2.500.6 2.600-.1 5.500-1.300 8.300.3 1.400.2 3.400-.2 5l-.5 3.400h-1.600l.5-.9.300-3.400-1.600-1.600-1.700 2.800-.9 3.100h-1.700l.9-1 .6-2.500-.3-3.600h-3.600l-.4 6.100.4 1h-1.800l-.3-1-.5-4.200-.6 4.200.3 1h-1.700l-.2-1-.2-6.800c-1-1.800-1.200-4-.3-5.600-.6-.9-.9-1.900-.8-3.100z" fill="#a3d6a7"/></g>
<g transform="translate(1060.400,172.500) scale(.85,.76)"><path d="M3.500 1.200l1 1.600h2.200l1-1.600.6 3.300c0 1.500-.6 2.400-1.500 3 1 1.400 3.400 1.200 5.800 1.400 2 .2 2.500 1.300 2.600 2.400.9-2.200 1.400-4.600.9-6.800-.4-1.700-1.500-2.400-2.600-2l-.2-.7c1.700-.7 3.200.4 3.700 2.500.6 2.600-.1 5.500-1.300 8.300.3 1.400.2 3.400-.2 5l-.5 3.400h-1.600l.5-.9.300-3.400-1.600-1.600-1.700 2.800-.9 3.100h-1.700l.9-1 .6-2.500-.3-3.600h-3.600l-.4 6.100.4 1h-1.800l-.3-1-.5-4.200-.6 4.200.3 1h-1.700l-.2-1-.2-6.800c-1-1.800-1.200-4-.3-5.600-.6-.9-.9-1.900-.8-3.100z" fill="#f0dcb6"/></g>
<path d="M1197 104.500l1.500 1.800h-3zM1197 610l1.500-1.800h-3z" fill="#777"/>
</svg>
<div class="t" style="left:1058.500px;top:108.500px;font-size:8.800px;color:#444">Cat Offset</div>
<div class="t" style="left:1084px;top:131.500px;font-size:7px;color:#444">Basic Cut</div>
<div class="t" style="left:1058.500px;top:156px;font-size:8.800px;color:#444">Cat</div>
<div class="t" style="left:1084px;top:179px;font-size:7px;color:#444">Basic Cut</div>
<div class="abs" style="left:1041px;top:615.500px;width:159px;height:1px;background:#e6e7e9"></div>
<div class="abs" style="left:1047px;top:620.500px;width:33.700px;height:23.200px;background:#fff;border:1px solid #8a8a8a;border-radius:1.500px"></div>
<div class="t" style="left:1087px;top:629px;font-size:6.200px;color:#444">Blank Canvas</div>
<div class="abs" style="left:1041px;top:647px;width:159px;height:31px;background:#dedfe1"></div>
<svg class="abs" style="left:1041px;top:647px" width="159" height="20" viewBox="1041 647 159 20" fill="none" stroke="#c3c4c6" stroke-width=".9" stroke-linejoin="round">
<rect x="1050.500" y="651.500" width="5.500" height="5.500" rx="1"/><circle cx="1057.800" cy="658.500" r="3"/>
<path d="M1080 651.500h5.500v2.500a3 3 0 1 1 0 5h-2.500v-2.500h-3z"/>
<path d="M1112.500 652l5.500 5.500a2 2 0 0 1-2.800 2.800l-5.500-5.500a1.400 1.400 0 0 1 2-2l4.500 4.500"/>
<path d="M1145 657.500l4-1.500 4 1.500-4 1.500zM1144.500 659.500l4.500 1.700 4.500-1.700M1149 651v4M1147.500 653.500l1.500 1.600 1.500-1.600"/>
<rect x="1180.500" y="651.500" width="9.500" height="9.500" stroke-dasharray="2 1.800"/>
</svg>
<div class="t c sl" style="left:1055px;top:668.500px;color:#c4c5c7">Slice</div>
<div class="t c sl" style="left:1084px;top:668.500px;color:#c4c5c7">Weld</div>
<div class="t c sl" style="left:1115px;top:668.500px;color:#c4c5c7">Attach</div>
<div class="t c sl" style="left:1149px;top:668.500px;color:#c4c5c7">Flatten</div>
<div class="t c sl" style="left:1185px;top:668.500px;color:#c4c5c7">Contour</div>



<svg class="abs" style="left:0;top:540px" width="160" height="120" viewBox="0 540 160 120">
<ellipse cx="78" cy="600.900" rx="64.800" ry="50.400" fill="#c8381c"/>
<g transform="translate(10 545) scale(.16223)" fill="#fff" stroke="#fff" stroke-width="1.2" font-family="Liberation Serif" font-style="italic">
<text x="112" y="338" font-size="262" textLength="160" lengthAdjust="spacingAndGlyphs">C</text>
<text x="270" y="336" font-size="176" textLength="138" lengthAdjust="spacingAndGlyphs">ra</text>
<text x="398" y="336" font-size="236" textLength="150" lengthAdjust="spacingAndGlyphs">ft</text>
<text x="178" y="532" font-size="262" textLength="150" lengthAdjust="spacingAndGlyphs">S</text>
<text x="326" y="530" font-size="176" textLength="236" lengthAdjust="spacingAndGlyphs">ara</text>
<text x="556" y="530" font-size="176" textLength="112" lengthAdjust="spacingAndGlyphs">h</text>
<text x="582" y="290" font-size="50" font-style="normal" font-weight="bold" stroke="none" textLength="163" lengthAdjust="spacingAndGlyphs">WITH</text>
<g fill="none" stroke-width="7" stroke-linecap="round">
<path d="M245 182C200 150 118 165 113 212C110 245 150 255 160 228"/>
<path d="M440 246L550 238"/>
<path d="M425 340C415 375 395 395 385 380"/>
<path d="M262 545C215 585 165 545 168 495C172 450 235 430 262 470C275 500 245 525 222 512C205 500 215 478 232 482"/>
<path d="M590 440C610 395 650 362 690 368C715 378 705 418 675 418C655 416 645 400 650 388"/>
<path d="M612 415C560 372 490 372 462 395C445 415 470 435 492 420C505 408 495 395 485 398"/>
</g>
<path d="M585 328C615 300 650 312 680 318C705 322 730 312 748 296C735 330 700 340 665 332C635 325 610 322 585 328z" stroke="none"/>
</g>
</svg>

</body></html>
